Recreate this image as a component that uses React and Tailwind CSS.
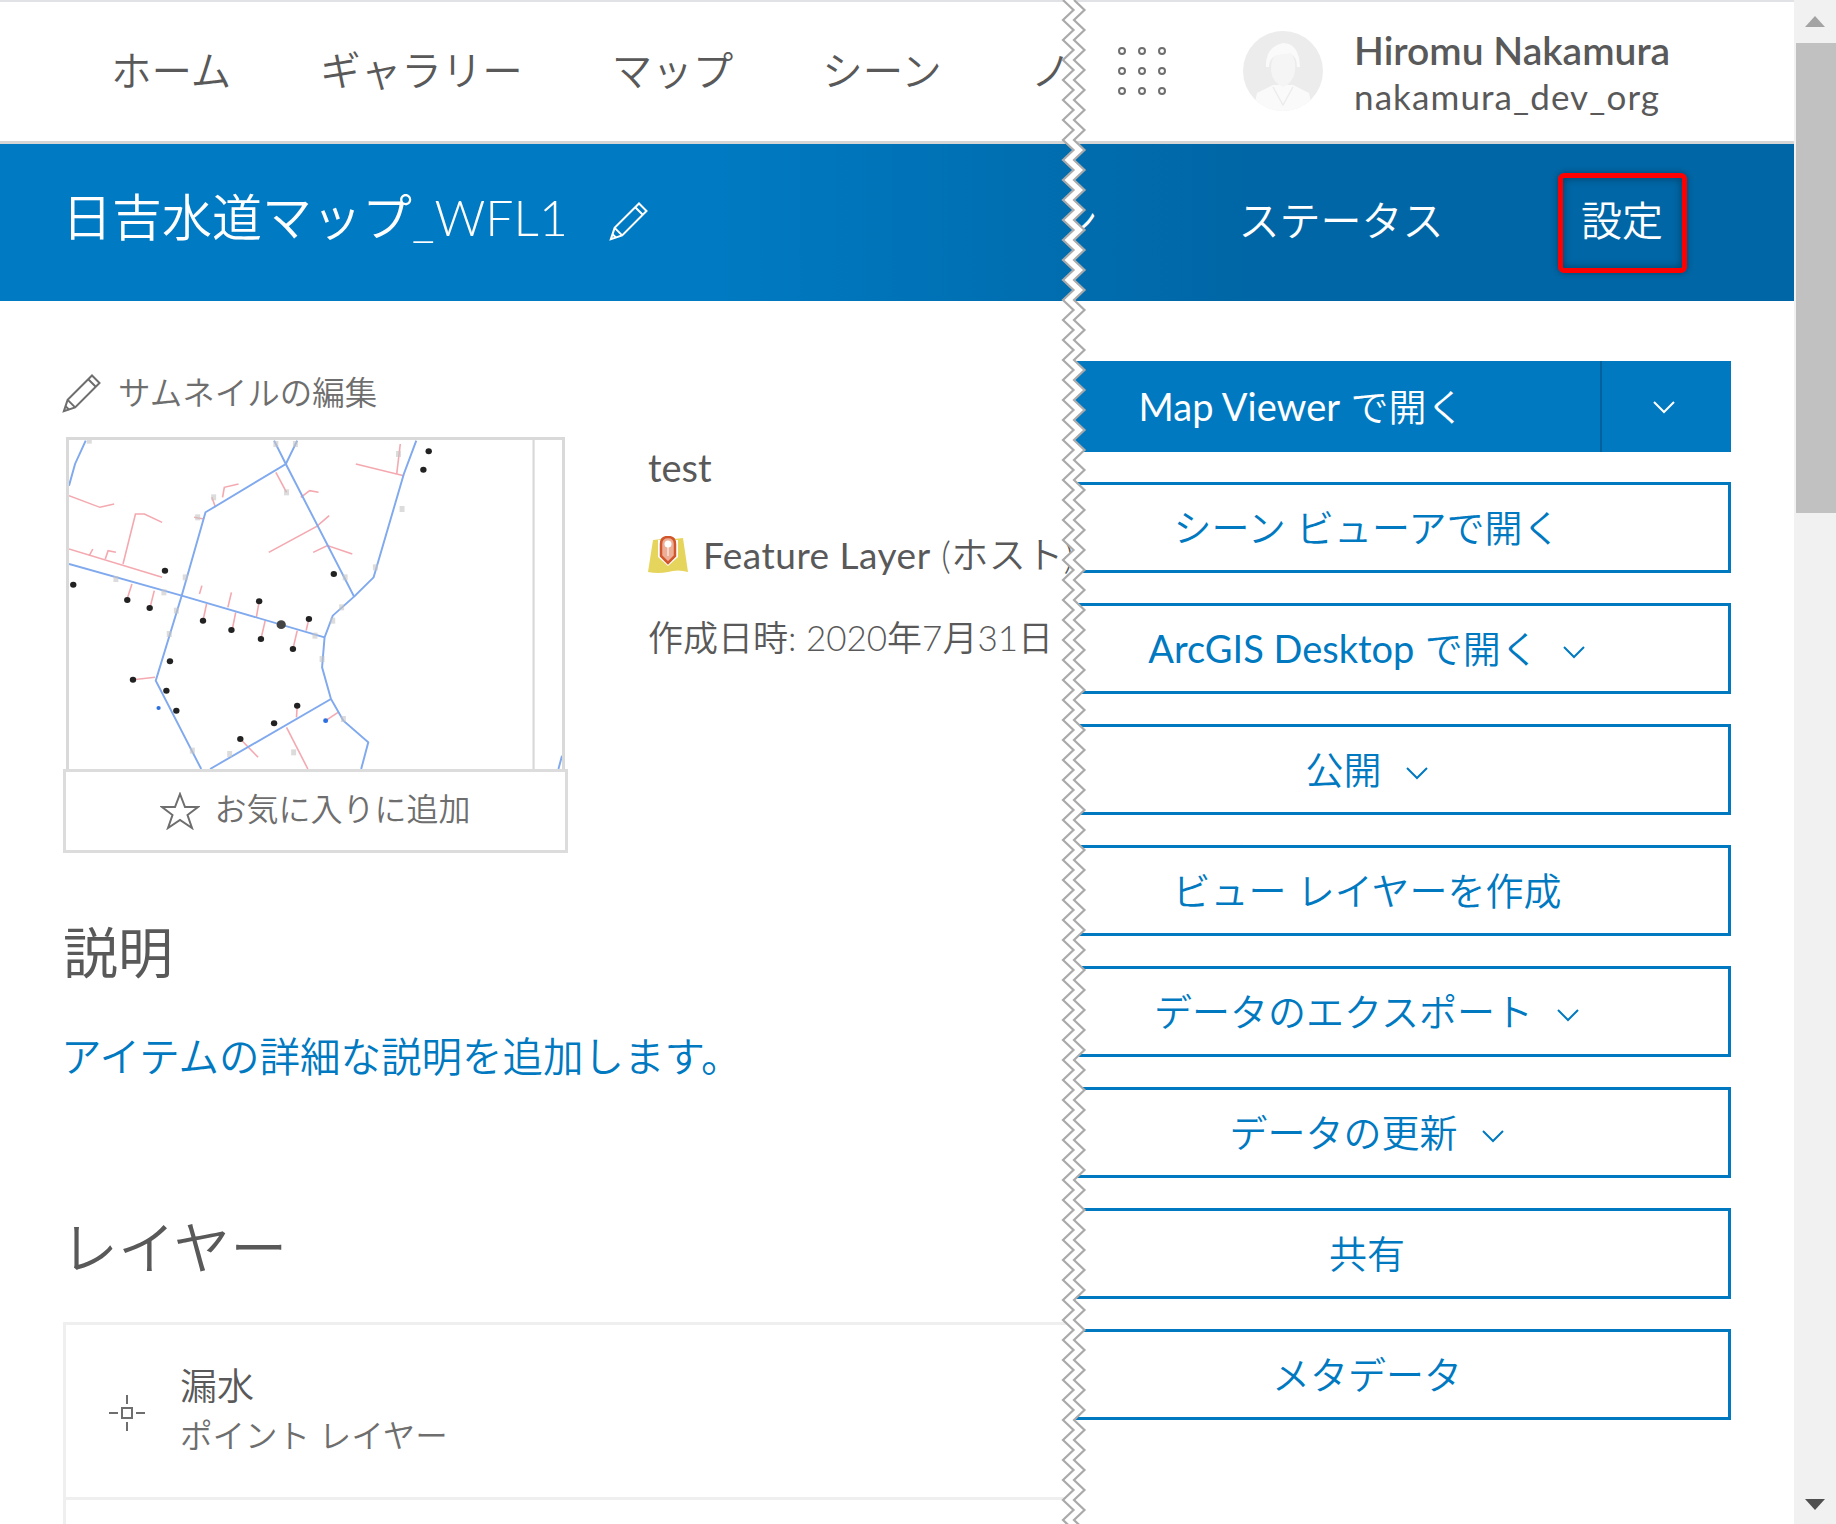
import React from 'react';

const BLUE_LINES = [
  '125,240 95,310 78,375',
  '720,240 688,310 462,455 395,705 322,960 450,1225',
  '655,240 688,310 880,708 820,765 797,830 790,920 815,1015 850,1080 920,1145 900,1225',
  '1055,240 1020,340 935,650 880,708',
  '78,610 395,705 797,830',
  '815,1015 475,1225',
  '1465,1185 1455,1225',
];

const PINK_LINES = [
  '78,405 165,440 205,430',
  '230,610 265,460 290,460 340,485',
  '78,565 340,650',
  '135,585 145,565',
  '180,595 188,570 210,575',
  '885,310 1020,345',
  '1010,250 1000,340',
  '640,575 775,497 810,465',
  '765,575 805,555 875,580',
  '690,1100 750,1225',
  '510,410 515,380 555,370',
  '480,410 490,440',
  '430,470 458,475',
  '660,335 690,395',
  '730,410 755,390 780,395',
  '240,720 255,670',
  '305,745 318,690',
  '445,700 452,675',
  '455,780 465,730',
  '525,740 535,695',
  '537,808 547,755',
  '605,770 613,722',
  '618,835 630,780',
  '708,865 720,810',
  '745,810 753,775',
  '258,957 320,950',
  '720,1035 718,1070',
  '560,1135 610,1190',
  '800,1080 835,1055',
];

const BLACK_DOTS = [
  [348, 630], [90, 672], [823, 640], [613, 722], [753, 775], [535, 808], [618, 835], [708, 865],
  [362, 902], [258, 957], [352, 990], [380, 1050], [720, 1035], [655, 1088], [560, 1135],
  [1090, 272], [1075, 327], [242, 718], [305, 742], [455, 780],
];

const GREY_MARKS = [
  [135, 240], [660, 250], [715, 250], [1005, 280], [485, 410], [440, 470], [690, 395], [405, 650],
  [380, 750], [360, 820], [855, 650], [940, 620], [845, 740], [820, 780], [790, 895], [850, 1075],
  [530, 1180], [425, 1170], [710, 1175], [1015, 445], [210, 655], [345, 695], [770, 825],
];

const BUTTONS = [
  { label: 'シーン ビューアで開く' },
  { latin: 'ArcGIS Desktop', label: ' で開く', menu: true },
  { label: '公開', menu: true },
  { label: 'ビュー レイヤーを作成' },
  { label: 'データのエクスポート', menu: true },
  { label: 'データの更新', menu: true },
  { label: '共有' },
  { label: 'メタデータ' },
];

function Chevron({ className }) {
  return (
    <svg width="24" height="14" viewBox="0 0 24 14" fill="none" stroke="currentColor" strokeWidth="2" className={className}>
      <polyline points="2,2 12,12 22,2" />
    </svg>
  );
}

function Pencil({ size, className }) {
  return (
    <svg width={size} height={size} viewBox="0 0 32 32" fill="none" stroke="currentColor" strokeWidth="1.6" className={className}>
      <path d="M1.5 30.5 L4.5 21.5 L24 2 L30 8 L10.5 27.5 Z" />
      <path d="M4.5 21.5 L10.5 27.5 M21 5 L27 11 M2.8 26.5 L5.5 29.2" />
    </svg>
  );
}

function ThumbnailMap() {
  return (
    <svg viewBox="78 238 1387 987" preserveAspectRatio="none" className="w-full h-full blur-[0.7px]">
      <line x1="1385" y1="238" x2="1385" y2="1225" stroke="#d8d8d8" strokeWidth="6" />
      {PINK_LINES.map((p) => (
        <polyline key={p} points={p} fill="none" stroke="#f4a9b0" strokeWidth="4.5" />
      ))}
      {BLUE_LINES.map((p) => (
        <polyline key={p} points={p} fill="none" stroke="#80a9ee" strokeWidth="5.5" />
      ))}
      {GREY_MARKS.map(([x, y]) => (
        <rect key={x + '-' + y} x={x - 7} y={y - 9} width="14" height="18" fill="#c4c4c4" opacity="0.6" />
      ))}
      {BLACK_DOTS.map(([x, y]) => (
        <ellipse key={x + '-' + y} cx={x} cy={y} rx="9" ry="9" fill="#222" />
      ))}
      <circle cx="675" cy="792" r="13" fill="#444" />
      <circle cx="800" cy="1080" r="7" fill="#2b6fe0" />
      <circle cx="330" cy="1042" r="6" fill="#2b6fe0" />
    </svg>
  );
}

function LayerIcon() {
  return (
    <svg width="40" height="38" viewBox="0 0 40 38" className="shrink-0">
      <path d="M5 4 L14 3 L26 3 L35 2 L40 36 Q30 33 20 36 Q10 38 0 36 Z" fill="#e6d55c" />
      <path d="M20 30 L10 21 L10 4 L30 4 L30 21 Z" fill="#fff" />
      <path d="M20 27 L13 20 L13 8 Q13 1 20 1 Q27 1 27 8 L27 20 Z" fill="#ecae97" stroke="#d2562c" strokeWidth="2.5" />
      <circle cx="20" cy="8" r="3.5" fill="#fff" />
      <line x1="20" y1="11" x2="20" y2="20" stroke="#fff" strokeWidth="1" />
    </svg>
  );
}

function PointIcon() {
  return (
    <svg width="38" height="38" viewBox="0 0 38 38" fill="none" stroke="#6e6e6e" strokeWidth="2" className="shrink-0 mt-[3px]">
      <rect x="14" y="14" width="10" height="10" />
      <path d="M19 1 V10 M19 28 V37 M1 19 H10 M28 19 H37" />
    </svg>
  );
}

function Avatar() {
  return (
    <svg width="80" height="80" viewBox="0 0 80 80" className="shrink-0">
      <defs>
        <clipPath id="avatar-clip">
          <ellipse cx="40" cy="40" rx="40" ry="40" />
        </clipPath>
      </defs>
      <g clipPath="url(#avatar-clip)">
        <rect width="80" height="80" fill="#ececec" />
        <path d="M10 80 L14 62 L30 54 L50 54 L66 62 L70 80 Z" fill="#fafafa" />
        <path d="M23 36 Q22 16 40 12 Q56 12 57 36 L54 36 Q54 26 48 23 L32 25 Q26 28 26 36 Z" fill="#fafafa" />
        <path d="M28 40 Q28 25 34 24 L48 22 Q53 28 52 40 Q50 52 40 56 Q30 52 28 40 Z" fill="#f5f5f5" />
        <path d="M30 56 L40 74 L50 56" fill="none" stroke="#ececec" strokeWidth="1.5" />
      </g>
    </svg>
  );
}

// double zigzag cut mark that runs down the whole page
function CutMark() {
  const left = [];
  const right = [];
  for (let y = 0; y <= 1530; y += 10) {
    const x = (y / 10) % 2 === 0 ? 3 : 13.5;
    left.push(x + ',' + y);
    right.push(x + 11 + ',' + y);
  }
  const band = left.join(' ') + ' ' + [...right].reverse().join(' ');
  return (
    <svg width="30" height="1524" className="absolute left-[1060px] top-0">
      <polygon points={band} fill="#fff" />
      <polyline points={left.join(' ')} fill="none" stroke="#aaaaaa" strokeWidth="2.2" />
      <polyline points={right.join(' ')} fill="none" stroke="#aaaaaa" strokeWidth="2.2" />
    </svg>
  );
}

function Scrollbar() {
  return (
    <div className="w-[42px] h-full bg-[#f1f1f1] flex flex-col">
      <div className="h-[43px] flex items-center justify-center">
        <svg width="20" height="11" viewBox="0 0 20 11"><polygon points="10,0 20,11 0,11" fill="#a3a3a3" /></svg>
      </div>
      <div className="h-[470px] ml-[2px] bg-[#c1c1c1]" />
      <div className="flex-1" />
      <div className="h-[40px] flex items-center justify-center">
        <svg width="20" height="11" viewBox="0 0 20 11"><polygon points="0,0 20,0 10,11" fill="#505050" /></svg>
      </div>
    </div>
  );
}

export default function App() {
  return (
    <div className="relative w-[1836px] h-[1524px] overflow-hidden flex bg-white text-[#595959] font-[Lato,'Noto_Sans_CJK_JP',sans-serif]">
      <div className="w-[1794px] flex flex-col">
        {/* Top nav */}
        <header className="h-[144px] shrink-0 flex border-t-2 border-t-[#e0e2e6] border-b-[3px] border-b-[#d6d6d6]">
          <nav className="w-[1072px] overflow-hidden flex items-center gap-[89px] pl-[111px] pb-[1px] text-[40.5px] font-[350] whitespace-nowrap">
            <span>ホーム</span>
            <span>ギャラリー</span>
            <span>マップ</span>
            <span>シーン</span>
            <span>ノートブック</span>
          </nav>
          <div className="flex-1 flex items-center pl-[46px] pb-[2px]">
            <div className="grid grid-cols-3 gap-[12px]">
              {[1, 2, 3, 4, 5, 6, 7, 8, 9].map((n) => (
                <span key={n} className="w-2 h-2 rounded-full border-2 border-[#6e6e6e]" />
              ))}
            </div>
            <div className="ml-[77px]">
              <Avatar />
            </div>
            <div className="ml-[31px] pt-[4px]">
              <div className="text-[39px] leading-[46px] font-semibold">Hiromu Nakamura</div>
              <div className="text-[35px] leading-[46px] tracking-[1.1px]">nakamura_dev_org</div>
            </div>
          </div>
        </header>

        {/* Item title bar */}
        <div className="h-[157px] shrink-0 flex text-white bg-linear-to-r from-[#007ac2] from-[40%] to-[#0066a5] to-[70%]">
          <div className="w-[1072px] flex items-center pl-[62px] pb-[10px]">
            <span className="text-[50px] font-[350] whitespace-nowrap">日吉水道マップ_WFL1</span>
            <Pencil size={40} className="ml-[41px] mt-[6px]" />
          </div>
          <div className="flex-1 overflow-hidden flex items-center whitespace-nowrap text-[41px] font-[350]">
            <span className="-ml-[421px] mr-[141px] pb-[4px]">ビジュアライゼーション</span>
            <span className="pb-[4px]">ステータス</span>
            <span className="ml-[114px] w-[129px] h-[100px] pb-[4px] rounded-[6px] border-[5px] border-[#ff0000] flex items-center justify-center shadow-[0_0_6px_rgba(0,0,0,0.35),inset_0_0_8px_rgba(0,0,0,0.4)]">
              設定
            </span>
          </div>
        </div>

        <div className="flex-1 flex min-h-0">
          {/* Left column */}
          <main className="w-[1072px] overflow-hidden pl-[63px]">
            <div className="flex">
              <div className="w-[505px] shrink-0 pt-[72px]">
                <div className="h-[40px] flex items-center text-[32.5px] font-[350] text-[#6e6e6e] whitespace-nowrap">
                  <Pencil size={40} className="-ml-[1px]" />
                  <span className="ml-[16px]">サムネイルの編集</span>
                </div>
                <div className="mt-[24px] ml-[3px] w-[499px] h-[332px] border-x-[3px] border-t-[3px] border-[#d9d9d9]">
                  <ThumbnailMap />
                </div>
                <div className="h-[84px] pb-[4px] border-[3px] border-[#dcdcdc] flex items-center justify-center text-[32px] font-[350] text-[#6e6e6e]">
                  <svg width="40" height="38" viewBox="0 0 40 38" fill="none" stroke="#6e6e6e" strokeWidth="2" className="mr-[14px] mt-[4px]">
                    <polygon points="20,2 25,15 38,15 27.5,23 32,36 20,28 8,36 12.5,23 2,15 15,15" />
                  </svg>
                  お気に入りに追加
                </div>
              </div>
              <div className="ml-[80px] whitespace-nowrap">
                <div className="mt-[144px] h-[44px] leading-[44px] text-[38px]">test</div>
                <div className="mt-[44px] h-[44px] flex items-center text-[37px] font-[350]">
                  <LayerIcon />
                  <span className="ml-[15px] tracking-[0.5px]">
                    <span className="font-normal">Feature Layer</span> (ホスト)
                  </span>
                </div>
                <div className="mt-[38px] h-[44px] leading-[44px] text-[35px] font-[350]">作成日時: 2020年7月31日</div>
              </div>
            </div>

            <h2 className="mt-[67px] h-[64px] leading-[64px] text-[55px] font-normal">説明</h2>
            <p className="mt-[48px] h-[50px] leading-[50px] -ml-[2px] text-[40.5px] font-[350] text-[#0079c1] whitespace-nowrap">
              アイテムの詳細な説明を追加します。
            </p>
            <h2 className="mt-[133px] h-[64px] leading-[64px] -ml-[2px] text-[57px] font-[350]">レイヤー</h2>

            <div className="mt-[43px] border-t-[3px] border-l-[3px] border-[#efefef]">
              <div className="h-[175px] flex items-center pl-[42px] border-b-[3px] border-[#efefef]">
                <PointIcon />
                <div className="ml-[34px]">
                  <div className="text-[37px] leading-[50px] font-[350]">漏水</div>
                  <div className="text-[32.5px] leading-[50px] font-[350] text-[#6e6e6e]">ポイント レイヤー</div>
                </div>
              </div>
              <div className="h-[40px]" />
            </div>
          </main>

          {/* Action buttons */}
          <aside className="flex-1 overflow-hidden pt-[60px]">
            <div className="-ml-[69px] w-[728px] flex flex-col gap-[30px] text-[38px] font-[350] text-[#0079c1]">
              <div className="h-[91px] flex bg-[#0079c1] text-white">
                <div className="w-[597px] flex items-center justify-center whitespace-nowrap">
                  <span className="font-normal">Map Viewer</span>&nbsp;で開く
                </div>
                <div className="flex-1 border-l-2 border-[#00619b] flex items-center justify-center pr-[6px]">
                  <Chevron />
                </div>
              </div>
              {BUTTONS.map((b) => (
                <div key={b.label + b.latin} className="h-[91px] border-[3px] border-[#0079c1] flex items-center justify-center whitespace-pre">
                  {b.latin && <span className="font-normal">{b.latin}</span>}
                  {b.label}
                  {b.menu && <Chevron className="ml-[23px] mt-[6px]" />}
                </div>
              ))}
            </div>
          </aside>
        </div>
      </div>

      <Scrollbar />
      <CutMark />
    </div>
  );
}
